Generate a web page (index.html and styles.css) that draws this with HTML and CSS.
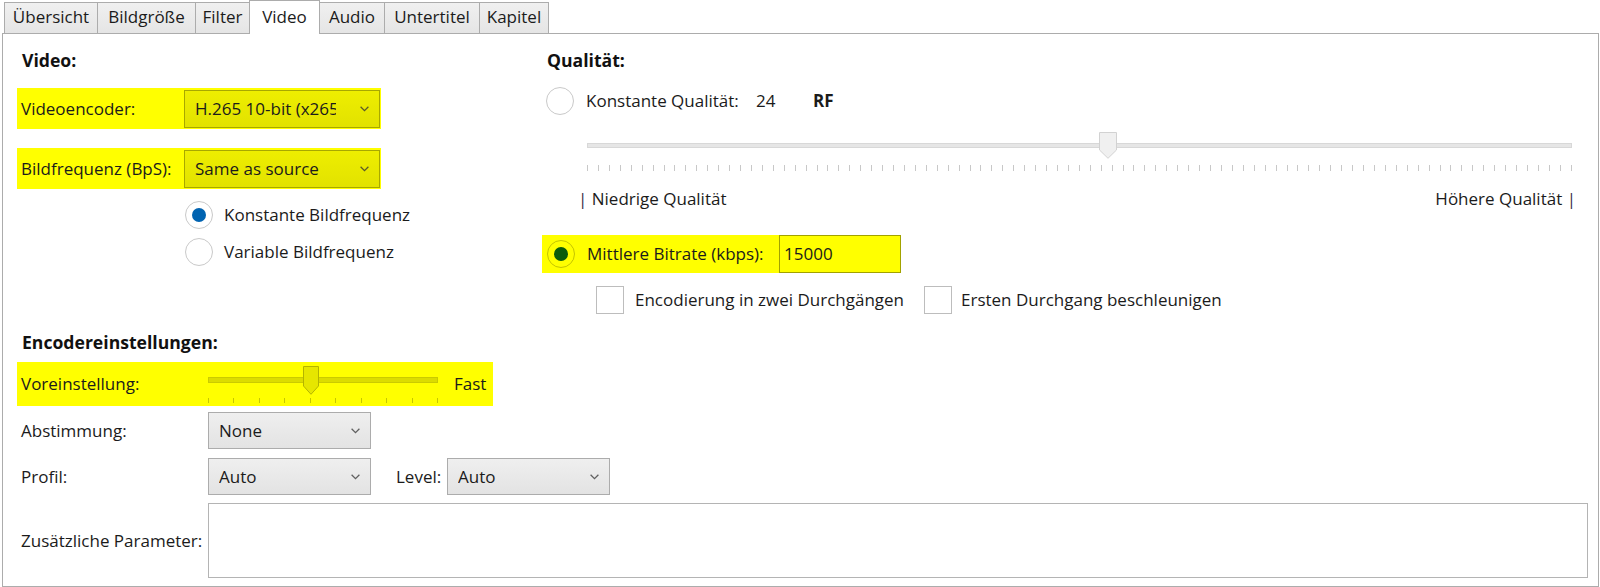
FILE: index.html
```html
<!DOCTYPE html>
<html lang="de">
<head>
<meta charset="utf-8">
<title>Video</title>
<link rel="stylesheet" href="styles.css">
</head>
<body>
<div class="tabstrip">
  <div class="tab t1">Übersicht</div>
  <div class="tab t2">Bildgröße</div>
  <div class="tab t3">Filter</div>
  <div class="tab t4 active">Video</div>
  <div class="tab t5">Audio</div>
  <div class="tab t6">Untertitel</div>
  <div class="tab t7">Kapitel</div>
</div>
<div class="panel">
  <div class="top">
    <section class="col-video">
      <h2 class="heading">Video:</h2>
      <div class="field">
        <span class="flabel">Videoencoder:</span>
        <div class="combo combo-hl">
          <span class="ctext clip">H.265 10-bit (x265)</span>
          <svg class="chev" width="9" height="6" viewBox="0 0 9 6"><polyline points="0.6,0.8 4.5,4.6 8.4,0.8" fill="none" stroke="#5a5a2a" stroke-width="1.3"/></svg>
        </div>
      </div>
      <div class="field field2">
        <span class="flabel">Bildfrequenz (BpS):</span>
        <div class="combo combo-hl">
          <span class="ctext">Same as source</span>
          <svg class="chev" width="9" height="6" viewBox="0 0 9 6"><polyline points="0.6,0.8 4.5,4.6 8.4,0.8" fill="none" stroke="#5a5a2a" stroke-width="1.3"/></svg>
        </div>
      </div>
      <div class="rgroup">
        <div class="ropt"><span class="radio"><span class="dot"></span></span><span>Konstante Bildfrequenz</span></div>
        <div class="ropt"><span class="radio"></span><span>Variable Bildfrequenz</span></div>
      </div>
    </section>
    <section class="col-quality">
      <h2 class="heading">Qualität:</h2>
      <div class="qrow">
        <span class="radio"></span>
        <span class="qlabel">Konstante Qualität:</span>
        <span class="qval">24</span>
        <span class="qunit">RF</span>
      </div>
      <div class="qslider">
        <div class="track"></div>
        <div class="qticks"></div>
        <svg class="thumb qthumb" width="18" height="27" viewBox="0 0 18 27"><path d="M0.5 0.5 H17.5 V18 L9 26.3 L0.5 18 Z" fill="#f0f0f0" stroke="#d2d2d2"/></svg>
      </div>
      <div class="scale"><span><span class="bar">|</span> Niedrige Qualität</span><span>Höhere Qualität <span class="bar">|</span></span></div>
      <div class="bitrate">
        <span class="radio radio-hl"><span class="dot dot-hl"></span></span>
        <span class="blabel">Mittlere Bitrate (kbps):</span>
        <span class="input">15000</span>
      </div>
      <div class="checks">
        <span class="check"></span><span class="clabel">Encodierung in zwei Durchgängen</span>
        <span class="check"></span><span class="clabel2">Ersten Durchgang beschleunigen</span>
      </div>
    </section>
  </div>
  <section class="encoder">
    <h2 class="heading">Encodereinstellungen:</h2>
    <div class="erow preset">
      <span class="elabel">Voreinstellung:</span>
      <div class="pslider">
        <div class="ptrack"></div>
        <div class="pticks"><i></i><i></i><i></i><i></i><i></i><i></i><i></i><i></i><i></i><i></i></div>
        <svg class="thumb pthumb" width="16" height="29" viewBox="0 0 16 29"><path d="M0.5 0.5 H15.5 V20 L8 28.3 L0.5 20 Z" fill="#e6e600" stroke="#b4b400"/></svg>
      </div>
      <span class="fast">Fast</span>
    </div>
    <div class="erow tune">
      <span class="elabel">Abstimmung:</span>
      <div class="combo small">
        <span class="ctext">None</span>
        <svg class="chev" width="9" height="6" viewBox="0 0 9 6"><polyline points="0.6,0.8 4.5,4.6 8.4,0.8" fill="none" stroke="#606060" stroke-width="1.3"/></svg>
      </div>
    </div>
    <div class="erow profile">
      <span class="elabel">Profil:</span>
      <div class="combo small">
        <span class="ctext">Auto</span>
        <svg class="chev" width="9" height="6" viewBox="0 0 9 6"><polyline points="0.6,0.8 4.5,4.6 8.4,0.8" fill="none" stroke="#606060" stroke-width="1.3"/></svg>
      </div>
      <span class="level">Level:</span>
      <div class="combo small">
        <span class="ctext">Auto</span>
        <svg class="chev" width="9" height="6" viewBox="0 0 9 6"><polyline points="0.6,0.8 4.5,4.6 8.4,0.8" fill="none" stroke="#606060" stroke-width="1.3"/></svg>
      </div>
    </div>
    <div class="erow params">
      <span class="elabel">Zusätzliche Parameter:</span>
      <div class="textbox"></div>
    </div>
  </section>
</div>
</body>
</html>
```

FILE: styles.css
```css
html, body {
  margin: 0;
  padding: 0;
  background: #ffffff;
}
body {
  width: 1600px;
  height: 587px;
  overflow: hidden;
  font-family: "Open Sans", "Noto Sans", sans-serif;
  font-size: 17px;
  color: #1b1b1b;
}

/* Tabs */
.tabstrip {
  display: flex;
  align-items: flex-end;
  height: 33px;
  padding-left: 4px;
}
.tab {
  box-sizing: border-box;
  height: 31px;
  padding: 0 0 2px;
  line-height: 28px;
  text-align: center;
  border: 1px solid #acacac;
  border-bottom: none;
  background: linear-gradient(#f0f0f0, #e5e5e5);
  margin-left: -1px;
  white-space: nowrap;
}
.tab.t1 { margin-left: 0; width: 94px; }
.tab.t2 { width: 99px; }
.tab.t3 { width: 55px; }
.tab.t4 { width: 71px; }
.tab.t5 { width: 66px; }
.tab.t6 { width: 96px; }
.tab.t7 { width: 70px; }
.tab.active {
  position: relative;
  z-index: 1;
  height: 34px;
  margin-bottom: -1px;
  padding: 2px 0 3px;
  background: #ffffff;
}

/* Panel */
.panel {
  box-sizing: border-box;
  margin-left: 2px;
  width: 1597px;
  height: 554px;
  border: 1px solid #acacac;
  padding: 14px 10px 0 14px;
}
.top {
  display: grid;
  grid-template-columns: 525px 1fr;
  padding-right: 12px;
}
.heading {
  margin: 0;
  padding-left: 5px;
  font-size: 17.6px;
  font-weight: 700;
  line-height: 24px;
  color: #111;
}

/* Left column */
.field {
  display: flex;
  align-items: center;
  width: 364px;
  height: 41px;
  margin-top: 16px;
  background: #ffff00;
  line-height: 24px;
}
.field2 { margin-top: 19px; }
.flabel {
  width: 163px;
  padding-left: 4px;
  flex: none;
}
.combo {
  box-sizing: border-box;
  display: flex;
  align-items: center;
  width: 196px;
  height: 38px;
  padding: 0 10px;
  border: 1px solid #acacac;
  background: linear-gradient(#efefef, #e3e3e3);
  flex: none;
}
.combo-hl {
  border-color: #a8a800;
  background: linear-gradient(#eeee00, #e2e200);
}
.ctext {
  flex: 1;
  overflow: hidden;
  white-space: nowrap;
  line-height: 24px;
}
.ctext.clip {
  flex: none;
  width: 141px;
}
.chev {
  flex: none;
  margin-left: auto;
}
.rgroup {
  margin-top: 11px;
  padding-left: 168px;
  display: flex;
  flex-direction: column;
  gap: 7px;
}
.ropt {
  display: flex;
  align-items: center;
  height: 30px;
  gap: 11px;
  line-height: 24px;
}
.radio {
  box-sizing: border-box;
  width: 28px;
  height: 28px;
  border-radius: 50%;
  border: 1.5px solid #c9c9c9;
  background: #ffffff;
  display: flex;
  align-items: center;
  justify-content: center;
  flex: none;
}
.dot {
  width: 14px;
  height: 14px;
  border-radius: 50%;
  background: #0063b1;
}

/* Right column */
.qrow {
  margin-top: 14px;
  height: 30px;
  display: flex;
  align-items: center;
  padding-left: 4px;
  line-height: 24px;
}
.qrow .radio { margin-right: 12px; }
.qlabel { width: 170px; flex: none; }
.qval { width: 57px; flex: none; }
.qunit { font-weight: 700; }

.qslider {
  position: relative;
  margin: 16px 4px 0 45px;
  padding-top: 11px;
}
.track {
  box-sizing: border-box;
  height: 5px;
  background: #e6e6e6;
  border: 1px solid #d8d8d8;
}
.qticks {
  margin-top: 17px;
  height: 6px;
  background: repeating-linear-gradient(to right, #c8c8c8 0 1px, transparent 1px 10.93px);
}
.thumb {
  position: absolute;
  top: 0;
  display: block;
}
.qthumb { left: 512px; }

.scale {
  margin-top: 16px;
  display: flex;
  justify-content: space-between;
  padding-left: 36px;
  line-height: 24px;
}
.bar { color: #3a2d48; }

.bitrate {
  box-sizing: border-box;
  margin-top: 24px;
  width: 359px;
  height: 38px;
  padding-left: 5px;
  display: flex;
  align-items: center;
  background: #ffff00;
  line-height: 24px;
}
.bitrate .radio { margin-right: 12px; }
.radio-hl {
  border-color: #c4c400;
  background: #ffff00;
}
.dot-hl { background: #0b5c0b; }
.blabel { width: 192px; flex: none; }
.input {
  box-sizing: border-box;
  width: 122px;
  height: 38px;
  padding-left: 4px;
  border: 1px solid #a2a200;
  line-height: 36px;
  flex: none;
}

.checks {
  margin-top: 13px;
  height: 28px;
  display: flex;
  align-items: center;
  padding-left: 54px;
  line-height: 24px;
}
.check {
  box-sizing: border-box;
  width: 28px;
  height: 28px;
  border: 1.5px solid #bdbdbd;
  background: #ffffff;
  flex: none;
}
.clabel { width: 289px; margin-left: 11px; flex: none; }
.clabel2 { margin-left: 9px; }

/* Encoder section */
.encoder { margin-top: 16px; }
.erow {
  display: flex;
  align-items: center;
  line-height: 24px;
}
.elabel {
  width: 187px;
  padding-left: 4px;
  flex: none;
}
.preset {
  margin-top: 8px;
  width: 476px;
  height: 44px;
  background: #ffff00;
  align-items: flex-start;
}
.preset .elabel, .preset .fast { align-self: center; }
.pslider {
  position: relative;
  width: 230px;
  margin-top: 4px;
  padding-top: 11px;
  flex: none;
}
.ptrack {
  box-sizing: border-box;
  height: 6px;
  background: #dcdc00;
  border: 1px solid #cbcb00;
}
.pticks {
  margin-top: 15px;
  height: 5px;
  display: flex;
  justify-content: space-between;
}
.pticks i {
  width: 1px;
  height: 5px;
  background: #c6c600;
}
.pthumb { left: 95px; }
.fast { margin-left: 16px; }

.tune { margin-top: 6px; }
.small {
  width: 163px;
  height: 37px;
}
.profile { margin-top: 9px; }
.level {
  width: 51px;
  margin-left: 25px;
  flex: none;
}
.params { margin-top: 8px; }
.textbox {
  box-sizing: border-box;
  flex: 1;
  height: 75px;
  border: 1px solid #b4b4b4;
  background: #ffffff;
}
```
